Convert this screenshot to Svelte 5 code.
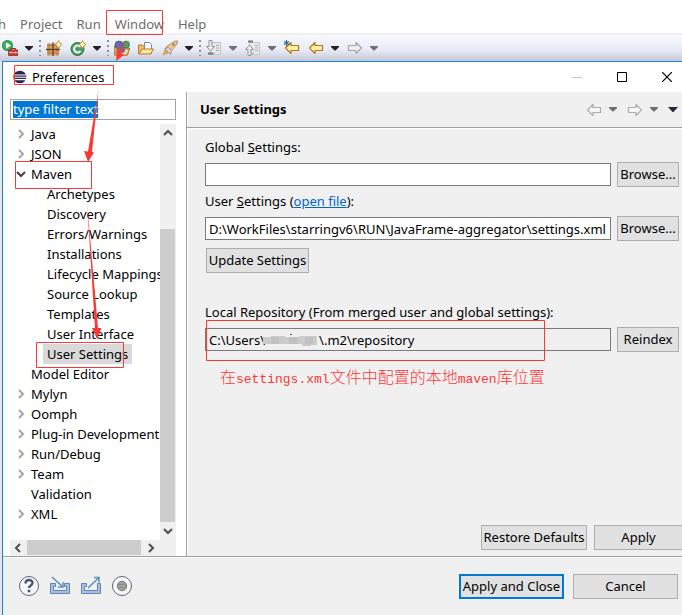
<script lang="ts">
	interface TreeNode {
		label: string;
		level?: number;
		arrow?: 'closed' | 'open';
	}

	const menus = ['h', 'Project', 'Run', 'Window', 'Help'];

	const nodes: TreeNode[] = [
		{ label: 'Java', arrow: 'closed' },
		{ label: 'JSON', arrow: 'closed' },
		{ label: 'Maven', arrow: 'open' },
		{ label: 'Archetypes', level: 2 },
		{ label: 'Discovery', level: 2 },
		{ label: 'Errors/Warnings', level: 2 },
		{ label: 'Installations', level: 2 },
		{ label: 'Lifecycle Mappings', level: 2 },
		{ label: 'Source Lookup', level: 2 },
		{ label: 'Templates', level: 2 },
		{ label: 'User Interface', level: 2 },
		{ label: 'User Settings', level: 2 },
		{ label: 'Model Editor' },
		{ label: 'Mylyn', arrow: 'closed' },
		{ label: 'Oomph', arrow: 'closed' },
		{ label: 'Plug-in Development', arrow: 'closed' },
		{ label: 'Run/Debug', arrow: 'closed' },
		{ label: 'Team', arrow: 'closed' },
		{ label: 'Validation' },
		{ label: 'XML', arrow: 'closed' }
	];

	// each group is followed by a dotted handle
	const toolbar = [
		[{ icon: 'run', caret: 'dark' }],
		[{ icon: 'package' }, { icon: 'class', caret: 'dark' }],
		[{ icon: 'type' }, { icon: 'folder' }, { icon: 'rocket', caret: 'dark' }],
		[
			{ icon: 'next', caret: 'dim' },
			{ icon: 'prev', caret: 'dim' },
			{ icon: 'edit' },
			{ icon: 'back', caret: 'dark' },
			{ icon: 'forward', caret: 'dim' }
		]
	];

	let selected = $state('User Settings');
	let filter = $state('type filter text');
	let globalSettings = $state('');
	let userSettings = $state('D:\\WorkFiles\\starringv6\\RUN\\JavaFrame-aggregator\\settings.xml');
	const repository = 'C:\\Users\\' + '\u00a0'.repeat(16) + '\\.m2\\repository';
</script>

{#snippet caret(kind: string)}
	<svg class="caret {kind}" width="8" height="5" viewBox="0 0 8 5"><path d="M0 0h8v1L4.500 4.500h-1L0 1z" /></svg>
{/snippet}

{#snippet leftArrow(fill: string, stroke: string)}
	<path d="M1.500 8 7 2.500V5.500h7.500v5H7v3z" {fill} {stroke} stroke-width="1.200" stroke-linejoin="round" />
{/snippet}

{#snippet rightArrow(fill: string, stroke: string)}
	<path d="M14.500 8 9 2.500V5.500H1.500v5H9v3z" {fill} {stroke} stroke-width="1.200" stroke-linejoin="round" />
{/snippet}

{#snippet sparkle()}
	<path d="M12.500 0.500 14 3l2 1.500-2 1.500-1.500 2.500L11 6 9 4.500 11 3z" fill="#f8dc76" stroke="#b98c2d" stroke-width=".8" />
	<path d="M12.500 2v5M10.500 4.500h4" stroke="#fffbe0" />
{/snippet}

{#snippet toolIcon(name: string)}
	<svg width="16" height="16" viewBox="0 0 16 16" fill="none">
		{#if name === 'run'}
			<circle cx="5.500" cy="5.500" r="5.500" fill="#268f43" />
			<circle cx="5.500" cy="5.500" r="4.300" fill="#42b65a" />
			<path d="M4 2.500 9 5.500 4 8.500z" fill="#fff" />
			<path d="M9.500 10V8.500h4V10" stroke="#9d2222" />
			<path d="M6.500 10h9.500v5.500H6.500z" fill="#ce3933" stroke="#98302c" stroke-width=".8" />
			<path d="M7 12.500h9M9 11.500v2M13.500 11.500v2" stroke="#f5b0a4" />
		{:else if name === 'package'}
			<path d="M1 3.500h12v12H1z" fill="#d8a36b" />
			<path d="M1 5.500h12M1 13h12M3 3.500v12M11 3.500v12" stroke="#b4763f" />
			<path d="M7 2.500v14M0 9.500h14" stroke="#664023" stroke-width="1.400" />
			{@render sparkle()}
		{:else if name === 'class'}
			<circle cx="7.500" cy="9" r="6.500" fill="#4b9e61" stroke="#28723d" />
			<path d="M10.500 7A3.500 3.500 0 1 0 10.500 11" stroke="#fff" stroke-width="2" />
			{@render sparkle()}
		{:else if name === 'type'}
			<path d="M.5 6h5l1 2h9l-2 7H1z" fill="#f4cf75" stroke="#a97128" />
			<circle cx="5" cy="5" r="4" fill="#6b67aa" stroke="#494785" stroke-width=".7" />
			<circle cx="12" cy="4.500" r="3.500" fill="#4aa269" stroke="#287445" stroke-width=".7" />
			<path d="M.5 15 3 9h12.500l-2.500 6z" fill="#f9dd95" stroke="#a97128" />
			<circle cx="8" cy="10" r="3" fill="#6b67aa" />
		{:else if name === 'folder'}
			<path d="M.5 13.500V5h4l1 1.500h8v7z" fill="#edc16d" stroke="#b57a25" />
			<path d="M6.500 2.500h5l2 2v6h-7z" fill="#fff" stroke="#7189b4" />
			<path d="m1 14 3-5h11.500l-3 5z" fill="#fbe5a6" stroke="#b57a25" />
		{:else if name === 'rocket'}
			<path d="M4 7 13 1h2.500L15 4l-7 8z" fill="#f2cb83" stroke="#b98c59" />
			<path d="m2.500 8.500 4-1 3 3-1 4z" fill="#dad7d6" stroke="#98908e" />
			<path d="m1 15 2-5 3 3z" fill="#f0ac45" stroke="#d48c28" stroke-width=".7" />
			<circle cx="11.500" cy="4.500" r="1.300" fill="#6489b0" />
		{:else if name === 'next' || name === 'prev'}
			<path d="M4.500 2.500h10v12h-10z" fill="#e9e9ec" stroke="#c1c1c5" />
			<path d="M10 5.500h3M10 8h3M10 10.500h3M6 13h3" stroke="#aaaab0" />
			{#if name === 'next'}
				<path d="M3 .500h3v6h2.500L4.500 11 .5 6.500H3z" fill="#eee" stroke="#929296" />
				<path d="M2 13.500h5" stroke="#777" stroke-width="2" />
			{:else}
				<path d="M3 15.500h3v-6h2.500L4.500 5 .5 9.500H3z" fill="#eee" stroke="#929296" />
				<path d="M3 1.500h5" stroke="#777" stroke-width="2" />
			{/if}
		{:else if name === 'edit'}
			{@render leftArrow('#fff0a8', '#b57a16')}
			<path d="M2.500 0v6M0 1.500l5 3M0 4.500l5-3" stroke="#3b6697" stroke-width="1.200" />
		{:else if name === 'back'}
			{@render leftArrow('#fff0a8', '#b57a16')}
		{:else}
			{@render rightArrow('#eee', '#a4a4a8')}
		{/if}
	</svg>
{/snippet}

<div class="workbench">
	<nav class="menubar">
		{#each menus as menu (menu)}
			<button>{menu}</button>
		{/each}
	</nav>

	<div class="toolbar">
		{#each toolbar as group, i (i)}
			{#if i > 0}<span class="handle"></span>{/if}
			<div class="group">
				{#each group as tool (tool.icon)}
					<button class="tool" aria-label={tool.icon}>
						{@render toolIcon(tool.icon)}
						{#if tool.caret}{@render caret(tool.caret)}{/if}
					</button>
				{/each}
			</div>
		{/each}
	</div>

	<div class="dialog">
		<header class="titlebar">
			<svg width="16" height="14" viewBox="0 0 16 14">
				<path d="M5 1A6.500 6.500 0 0 0 5 13" fill="#f39a30" />
				<circle cx="8" cy="7" r="6.300" fill="#2c2255" />
				<path d="M2 5h12M2 7.300h12M2 9.600h12" stroke="#fff" stroke-width="1.100" />
			</svg>
			<span>Preferences</span>
			<div class="controls">
				<button aria-label="Minimize"><svg width="10" height="10"><path d="M0 5.500h10" stroke="#c4c4c4" /></svg></button>
				<button aria-label="Maximize"><svg width="10" height="10"><path d="M.5.5h9v9h-9z" fill="none" stroke="#000" /></svg></button>
				<button aria-label="Close"><svg width="10" height="10"><path d="m0 0 10 10M10 0 0 10" stroke="#000" stroke-width="1.200" /></svg></button>
			</div>
		</header>

		<div class="body">
			<aside>
				<div class="filter"><input aria-label="Filter" bind:value={filter} /><span class="marked">{filter}</span></div>
				<div class="tree">
					<ul>
						{#each nodes as node (node.label)}
							<li class:child={node.level === 2}>
								<svg class="twist {node.arrow}" width="10" height="10" viewBox="0 0 10 10">
									{#if node.arrow === 'closed'}
										<path d="m3 1 4 4-4 4" />
									{:else if node.arrow === 'open'}
										<path d="m1 3 4 4 4-4" />
									{/if}
								</svg>
								<button class:selected={selected === node.label} onclick={() => (selected = node.label)}>{node.label}</button>
							</li>
						{/each}
					</ul>
					<div class="vscroll">
						<svg width="16" height="18" viewBox="0 0 16 18"><path d="m4 11 4-4 4 4" /></svg>
						<span class="space"></span>
						<span class="thumb"></span>
						<svg width="16" height="18" viewBox="0 0 16 18"><path d="m4 7 4 4 4-4" /></svg>
					</div>
				</div>
				<div class="hscroll">
					<svg width="17" height="16" viewBox="0 0 17 16"><path d="m10 4-4 4 4 4" /></svg>
					<span class="thumb"></span>
					<svg width="19" height="16" viewBox="0 0 19 16"><path d="m8 4 4 4-4 4" /></svg>
				</div>
			</aside>

			<main>
				<div class="heading">
					<h1>User Settings</h1>
					<div class="history">
						<button class="tool" aria-label="Back">
							<svg width="16" height="16" viewBox="0 0 16 16">{@render leftArrow('#f7f7f7', '#adadad')}</svg>
							{@render caret('dim')}
						</button>
						<button class="tool" aria-label="Forward">
							<svg width="16" height="16" viewBox="0 0 16 16">{@render rightArrow('#f7f7f7', '#adadad')}</svg>
							{@render caret('dim')}
						</button>
						<button class="tool" aria-label="View menu">
							<svg width="10" height="5" viewBox="0 0 10 5"><path d="M0 0h10L5.500 5h-1z" fill="#30213f" /></svg>
						</button>
					</div>
				</div>

				<div class="page">
					<label for="global">Global <u>S</u>ettings:</label>
					<div class="row">
						<input id="global" bind:value={globalSettings} />
						<button class="push">Browse...</button>
					</div>
					<div class="caption"><label for="user">User <u>S</u>ettings</label> (<a href="#open">open file</a>):</div>
					<div class="row">
						<input id="user" bind:value={userSettings} />
						<button class="push">Browse...</button>
					</div>
					<button class="push update">Update Settings</button>
					<label for="repo" class="local">Local Repository (From merged user and global settings):</label>
					<div class="row">
						<div class="masked">
							<input id="repo" value={repository} readonly />
							<svg class="smudge" width="56" height="14" viewBox="0 0 56 14">
								<path d="M0 4h8V3h14v1h14v-1h18v9h-6v1h-9v-2H0z" fill="#cbcbcb" />
								<path d="M8 4h8v7H8zM26 4h9v7h-9zM42 4h8v7h-8z" fill="#c1c1c1" />
								<path d="M27 1h2v1h-2z" fill="#555" />
							</svg>
						</div>
						<button class="push">Reindex</button>
					</div>
					<p class="note">在<span>settings.xml</span>文件中配置的本地<span>maven</span>库位置</p>
					<div class="actions">
						<button class="push">Restore Defaults</button>
						<button class="push apply">Apply</button>
					</div>
				</div>
			</main>
		</div>

		<footer>
			<button class="tool" aria-label="Help">
				<svg width="22" height="22" viewBox="0 0 22 22" fill="none">
					<circle cx="11" cy="11" r="9.500" fill="#f7f7f8" stroke="#59657f" />
					<path d="M7.500 8.500C7.500 4 14.500 4 14.500 8c0 2.500-3.500 2.500-3.500 5" stroke="#475578" stroke-width="2.400" />
					<path d="M9.700 14.800h2.600v2.400H9.700z" fill="#475578" />
				</svg>
			</button>
			<button class="tool" aria-label="Import">
				<svg width="22" height="22" viewBox="0 0 22 22" fill="none">
					<path d="M6.500 8.500h-5v10h19v-10h-5v3h2v4H4.500v-4h2z" fill="#a9bde0" stroke="#6583b8" />
					<path d="m3 2 11 10M14 7v5H9" stroke="#5592bd" stroke-width="1.500" />
				</svg>
			</button>
			<button class="tool" aria-label="Export">
				<svg width="22" height="22" viewBox="0 0 22 22" fill="none">
					<path d="M6.500 8.500h-5v10h19v-10h-3v7H4.500v-4h2z" fill="#a9bde0" stroke="#6583b8" />
					<path d="M8 13 18.500 3M14 2.500h5v5" stroke="#5592bd" stroke-width="1.500" />
				</svg>
			</button>
			<button class="tool" aria-label="Record">
				<svg width="22" height="22" viewBox="0 0 22 22">
					<circle cx="11" cy="11" r="9.500" fill="#f7f7f8" stroke="#59657f" />
					<circle cx="11" cy="11" r="4.700" fill="#a2a2a2" stroke="#777" />
					<path d="M7 9.500h8M7 12.500h8" stroke="#8b8b8b" />
				</svg>
			</button>
			<span class="space"></span>
			<button class="push wide primary">Apply and Close</button>
			<button class="push wide">Cancel</button>
		</footer>
	</div>

	<!-- red pen marks over the window -->
	<svg class="marks" width="682" height="615" viewBox="0 0 682 615">
		<g fill="none" stroke="#fb3838">
			<path d="M106.500 10.500h56v24h-56z" />
			<path d="M14.500 65.500h99v19h-99z" />
			<path d="M15.500 161.500h76v27h-76z" />
			<path d="M36.500 342.500h87v25h-87z" />
			<path d="M206.500 320.500h338v40h-338z" />
		</g>
		<g fill="#fb3838">
			<path d="m127 40-6 13 3 2-8 6 1-12 3 1z" />
			<path d="m98.500 90-6.500 62 2 .5-6 9.500-4-11 4 .5z" />
			<path d="m87 202 11 126h3.500l-4.500 11-5-11h3z" />
		</g>
	</svg>
</div>

<style>
	:global(body) {
		margin: 0;
		background: #e3e6ec;
	}

	.workbench {
		position: relative;
		display: flex;
		flex-direction: column;
		min-height: 100vh;
		overflow: hidden;
		color: #000;
		font-family: 'Noto Sans', 'Noto Sans CJK SC', sans-serif;
		font-size: 13px;
		line-height: 19px;
	}

	button,
	input {
		box-sizing: border-box;
		margin: 0;
		padding: 0;
		border: 0;
		border-radius: 0;
		background: none;
		color: inherit;
		font: inherit;
	}

	svg {
		display: block;
		flex: none;
	}

	.menubar {
		display: flex;
		gap: 14px;
		padding: 15px 0 0;
		margin-left: -2px;
		height: 18px;
		background: #fff;
		color: #6d6d6d;
	}

	.menubar button {
		line-height: 19px;
		height: 19px;
	}

	.toolbar {
		display: flex;
		align-items: center;
		height: 26px;
		padding: 2px 2px 0;
		background: linear-gradient(#f0f0f0 2px, #f7f9fe 2px, #e8ebf7 60%, #c6c8d4);
	}

	.group {
		display: flex;
		gap: 8px;
	}

	.tool {
		display: flex;
		align-items: center;
		gap: 7px;
	}

	.handle {
		width: 2px;
		height: 16px;
		margin: 0 5px 0 6px;
		background: repeating-linear-gradient(#8f8f8f 0 2px, transparent 2px 5px);
	}

	.caret.dark {
		fill: #222;
	}

	.caret.dim {
		fill: #6f6f75;
	}

	.dialog {
		flex: 1;
		display: flex;
		flex-direction: column;
		margin-left: 2px;
		border: solid #1883d7;
		border-width: 1px 0 0 1px;
		background: #f0f0f0;
	}

	.titlebar {
		display: flex;
		align-items: center;
		gap: 4px;
		height: 30px;
		padding: 0 10px 0 9px;
		background: #fff;
	}

	.controls {
		display: flex;
		gap: 35px;
		margin-left: auto;
	}

	.body {
		flex: 1;
		display: flex;
		border-bottom: 1px solid #a0a0a0;
		box-shadow: 0 1px #fff;
	}

	aside {
		display: flex;
		flex-direction: column;
		width: 183px;
		box-sizing: border-box;
		padding: 7px 10px 0 7px;
		background: #fff;
	}

	.filter {
		position: relative;
		height: 21px;
		margin-bottom: 4px;
	}

	.filter input {
		width: 100%;
		height: 21px;
		padding: 0 2px;
		border: 1px solid #a5a5a5;
	}

	.marked {
		position: absolute;
		left: 3px;
		top: 2px;
		height: 17px;
		line-height: 17px;
		background: #0078d7;
		color: #fff;
		pointer-events: none;
	}

	.tree {
		flex: 1;
		display: flex;
	}

	ul {
		flex: 1;
		min-width: 0;
		margin: 0;
		padding: 0;
		list-style: none;
	}

	li {
		display: flex;
		align-items: center;
		gap: 1px;
		height: 20px;
		padding-left: 6px;
	}

	li.child {
		padding-left: 22px;
	}

	li button {
		height: 20px;
		padding: 0 4px;
		white-space: nowrap;
	}

	li .selected {
		background: #d9d9d9;
	}

	.twist {
		fill: none;
		stroke: #a6a6a6;
		stroke-width: 2;
	}

	.twist.open {
		stroke: #404040;
	}

	.vscroll,
	.hscroll {
		display: flex;
		background: #f0f0f0;
		fill: none;
		stroke: #505050;
		stroke-width: 2;
	}

	.vscroll {
		flex-direction: column;
		width: 16px;
	}

	.vscroll .space {
		flex: 22;
	}

	.vscroll .thumb {
		flex: 74;
		width: 15px;
	}

	.thumb {
		background: #cdcdcd;
	}

	.hscroll {
		height: 16px;
		padding-right: 16px;
	}

	.hscroll .thumb {
		flex: 1;
		height: 15px;
	}

	main {
		flex: 1;
		display: flex;
		flex-direction: column;
		min-width: 0;
		border-left: 1px solid #a0a0a0;
		box-shadow: inset 1px 0 #fff;
	}

	.heading {
		display: flex;
		align-items: center;
		justify-content: space-between;
		height: 35px;
		padding: 0 4px 0 13px;
		border-bottom: 1px solid #a0a0a0;
		box-shadow: 0 1px #fff;
	}

	h1 {
		margin: 0;
		font-size: 13px;
		font-weight: 700;
	}

	.history {
		display: flex;
		gap: 10px;
	}

	.page {
		flex: 1;
		display: flex;
		flex-direction: column;
		gap: 5px;
		padding: 10px 0 6px 18px;
	}

	.row {
		display: flex;
		align-items: center;
		gap: 6px;
		padding-right: 3px;
	}

	.row input {
		flex: 1;
		min-width: 0;
		height: 23px;
		padding: 0 3px;
		border: 1px solid #7a7a7a;
		background: #fff;
	}

	.row .push {
		width: 62px;
	}

	.masked {
		position: relative;
		flex: 1;
		display: flex;
	}

	.masked input {
		background: #f0f0f0;
	}

	.smudge {
		position: absolute;
		left: 58px;
		top: 5px;
	}

	.push {
		height: 25px;
		border: 1px solid #adadad;
		background: #e1e1e1;
		text-align: center;
		white-space: nowrap;
	}

	.update {
		width: 103px;
		margin: 2px 0 0 1px;
	}

	.local {
		margin-top: 25px;
	}

	a {
		color: #0066cc;
	}

	.note {
		margin: 9px 0 0 15px;
		color: #fb3838;
		font-family: 'Noto Sans CJK SC', sans-serif;
		font-size: 16px;
		font-weight: 300;
		line-height: 20px;
	}

	.note span {
		font-family: 'Liberation Mono', monospace;
		font-size: 13px;
	}

	.actions {
		display: flex;
		justify-content: flex-end;
		gap: 7px;
		margin-top: auto;
	}

	.actions .push {
		width: 106px;
	}

	.actions .apply {
		width: 88px;
		border-right: 0;
	}

	footer {
		display: flex;
		align-items: center;
		gap: 9px;
		height: 58px;
		padding: 0 4px 0 15px;
	}

	.space {
		flex: 1;
	}

	.wide {
		width: 105px;
	}

	.primary {
		border: 2px solid #0078d7;
	}

	.marks {
		position: absolute;
		left: 0;
		top: 0;
		pointer-events: none;
	}
</style>
